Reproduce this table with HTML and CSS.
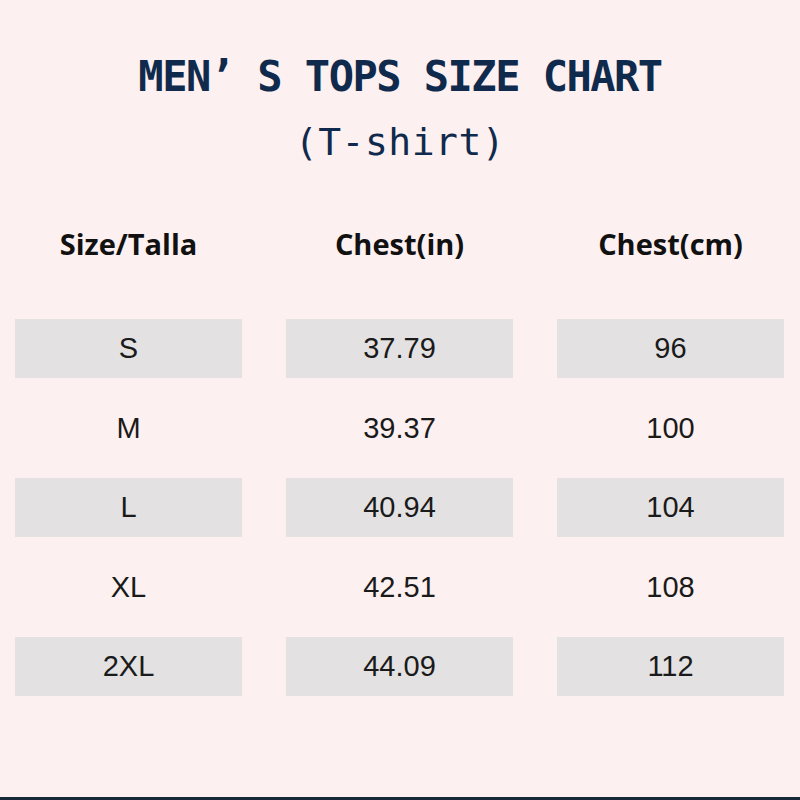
FILE: index.html
```html
<!DOCTYPE html>
<html>
<head>
<meta charset="utf-8">
<link rel="stylesheet" href="styles.css">
</head>
<body>
<div class="page">
  <h1 class="title">MEN’ S TOPS SIZE CHART</h1>
  <div class="subtitle">(T-shirt)</div>
  <div class="heads">
    <div class="head">Size/Talla</div>
    <div class="head">Chest(in)</div>
    <div class="head">Chest(cm)</div>
  </div>
  <div class="table">
    <div class="row shaded"><div class="cell">S</div><div class="cell">37.79</div><div class="cell">96</div></div>
    <div class="row"><div class="cell">M</div><div class="cell">39.37</div><div class="cell">100</div></div>
    <div class="row shaded"><div class="cell">L</div><div class="cell">40.94</div><div class="cell">104</div></div>
    <div class="row"><div class="cell">XL</div><div class="cell">42.51</div><div class="cell">108</div></div>
    <div class="row shaded"><div class="cell">2XL</div><div class="cell">44.09</div><div class="cell">112</div></div>
  </div>
  <div class="bottom-bar"></div>
</div>
</body>
</html>
```
FILE: styles.css
```css
html, body {
  margin: 0;
  padding: 0;
  background: #fdf0f0;
}
.page {
  width: 800px;
  height: 800px;
  display: flex;
  flex-direction: column;
  background: #fdf0f0;
  overflow: hidden;
}
.title {
  margin: 0;
  padding-top: 52px;
  text-align: center;
  font-family: "DejaVu Sans Mono", monospace;
  font-weight: bold;
  font-size: 42px;
  line-height: 50px;
  letter-spacing: -1.5px;
  color: #0f2a4c;
}
.subtitle {
  margin-top: 17px;
  text-align: center;
  font-family: "DejaVu Sans Mono", monospace;
  font-size: 38px;
  line-height: 46px;
  letter-spacing: 0.5px;
  color: #0f2a4c;
}
.heads {
  margin-top: 61px;
  padding-left: 15px;
  display: grid;
  grid-template-columns: repeat(3, 227px);
  column-gap: 44px;
}
.head {
  text-align: center;
  font-family: "Open Sans", sans-serif;
  font-weight: bold;
  font-size: 29px;
  line-height: 36px;
  color: #111;
}
.table {
  margin-top: 57px;
  padding-left: 15px;
  display: flex;
  flex-direction: column;
  row-gap: 20.5px;
}
.row {
  display: grid;
  grid-template-columns: repeat(3, 227px);
  column-gap: 44px;
  height: 59px;
}
.cell {
  display: flex;
  align-items: center;
  justify-content: center;
  font-family: "Liberation Sans", Arial, sans-serif;
  font-size: 29px;
  color: #1a1a1a;
}
.row.shaded .cell {
  background: #e3e1e1;
}
.bottom-bar {
  margin-top: auto;
  height: 3px;
  background: #172836;
}
```
